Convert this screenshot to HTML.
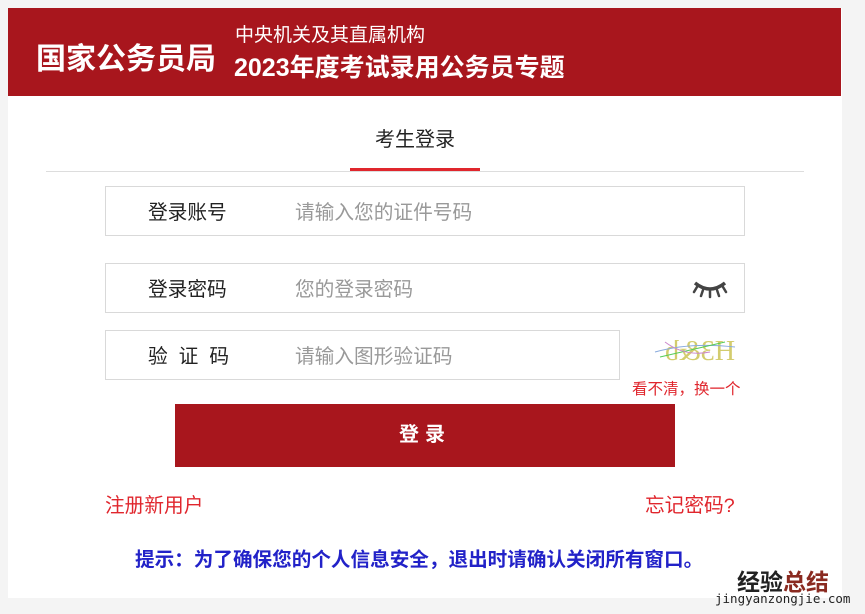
<!DOCTYPE html>
<html><head><meta charset="utf-8"><style>
*{margin:0;padding:0;box-sizing:border-box}
body{width:865px;height:614px;background:#f4f4f4;font-family:"Liberation Sans","Noto Sans CJK SC",sans-serif;position:relative;overflow:hidden}
.panel{position:absolute;left:8px;top:8px;width:834px;height:590px;background:#fff}
.hdr{position:absolute;left:8px;top:8px;width:833px;height:88px;background:#a8161d;color:#fff}
.a{position:absolute;left:28px;top:26px;font-size:30px;font-weight:bold}
.b{position:absolute;left:227px;top:12px;font-size:19px}
.c{position:absolute;left:226px;top:40px;font-size:25px;font-weight:bold}
.t{position:absolute;left:375px;top:123px;font-size:20px;color:#222}
.line{position:absolute;left:46px;top:171px;width:758px;height:1px;background:#ddd}
.ul{position:absolute;left:350px;top:168px;width:130px;height:3px;background:#e0262d}
.f{position:absolute;left:105px;height:50px;border:1px solid #d9d9d9;font-size:19.7px}
.f .l{position:absolute;left:42px;top:9px;color:#222}
.f .p{position:absolute;left:189px;top:9px;color:#999}
.btn{position:absolute;left:175px;top:404px;width:500px;height:63px;background:#a8161d;color:#fff;font-size:20px;font-weight:bold;text-align:center;line-height:63px;letter-spacing:6px}
.red{position:absolute;color:#e0262d;font-size:19.7px}
.tip{position:absolute;left:135px;top:543px;color:#2222c8;font-size:19.6px;font-weight:bold;white-space:nowrap}
</style></head><body>
<div class="panel"></div>
<div class="hdr"><div class="a">国家公务员局</div><div class="b">中央机关及其直属机构</div><div class="c">2023年度考试录用公务员专题</div></div>
<div class="t">考生登录</div>
<div class="line"></div><div class="ul"></div>
<div class="f" style="top:186px;width:640px"><span class="l">登录账号</span><span class="p">请输入您的证件号码</span></div>
<div class="f" style="top:263px;width:640px"><span class="l">登录密码</span><span class="p">您的登录密码</span>
<svg style="position:absolute;left:586px;top:14px" width="36" height="22" viewBox="0 0 36 22"><path d="M3 5 Q18 17 33 5" fill="none" stroke="#444" stroke-width="3.5"/><g stroke="#444" stroke-width="2.5" stroke-linecap="round"><path d="M5 9 L2 14"/><path d="M11 12 L9 18"/><path d="M18 13 L18 19"/><path d="M25 12 L27 18"/><path d="M31 9 L34 14"/></g></svg></div>
<div class="f" style="top:330px;width:515px"><span class="l" style="letter-spacing:11px">验证码</span><span class="p">请输入图形验证码</span></div>
<svg style="position:absolute;left:640px;top:322px" width="105" height="50"><text x="10" y="38" font-size="28" font-family="Liberation Serif" fill="#c9c04a" transform="scale(-1,1) translate(-105,0)" opacity=".8">H3&amp;b</text><path d="M15 30 Q50 20 95 25" stroke="#8ad" fill="none"/><path d="M20 35 Q50 28 85 20" stroke="#5c5" fill="none"/><path d="M25 20 Q45 35 70 30" stroke="#c8c" fill="none"/></svg>
<div class="red" style="left:632px;top:377px;font-size:15.5px">看不清，换一个</div>
<div class="btn">登录</div>
<div class="red" style="left:105px;top:489px">注册新用户</div>
<div class="red" style="left:645px;top:489px">忘记密码?</div>
<div class="tip">提示：为了确保您的个人信息安全，退出时请确认关闭所有窗口。</div>
<div style="position:absolute;left:737px;top:563px;font-size:23px;font-weight:bold;color:#222">经验<span style="color:#8a2a20">总结</span></div>
<div style="position:absolute;left:715px;top:591px;font-size:12.5px;color:#222;font-family:'DejaVu Sans Mono',monospace">jingyanzongjie.com</div>
</body></html>
